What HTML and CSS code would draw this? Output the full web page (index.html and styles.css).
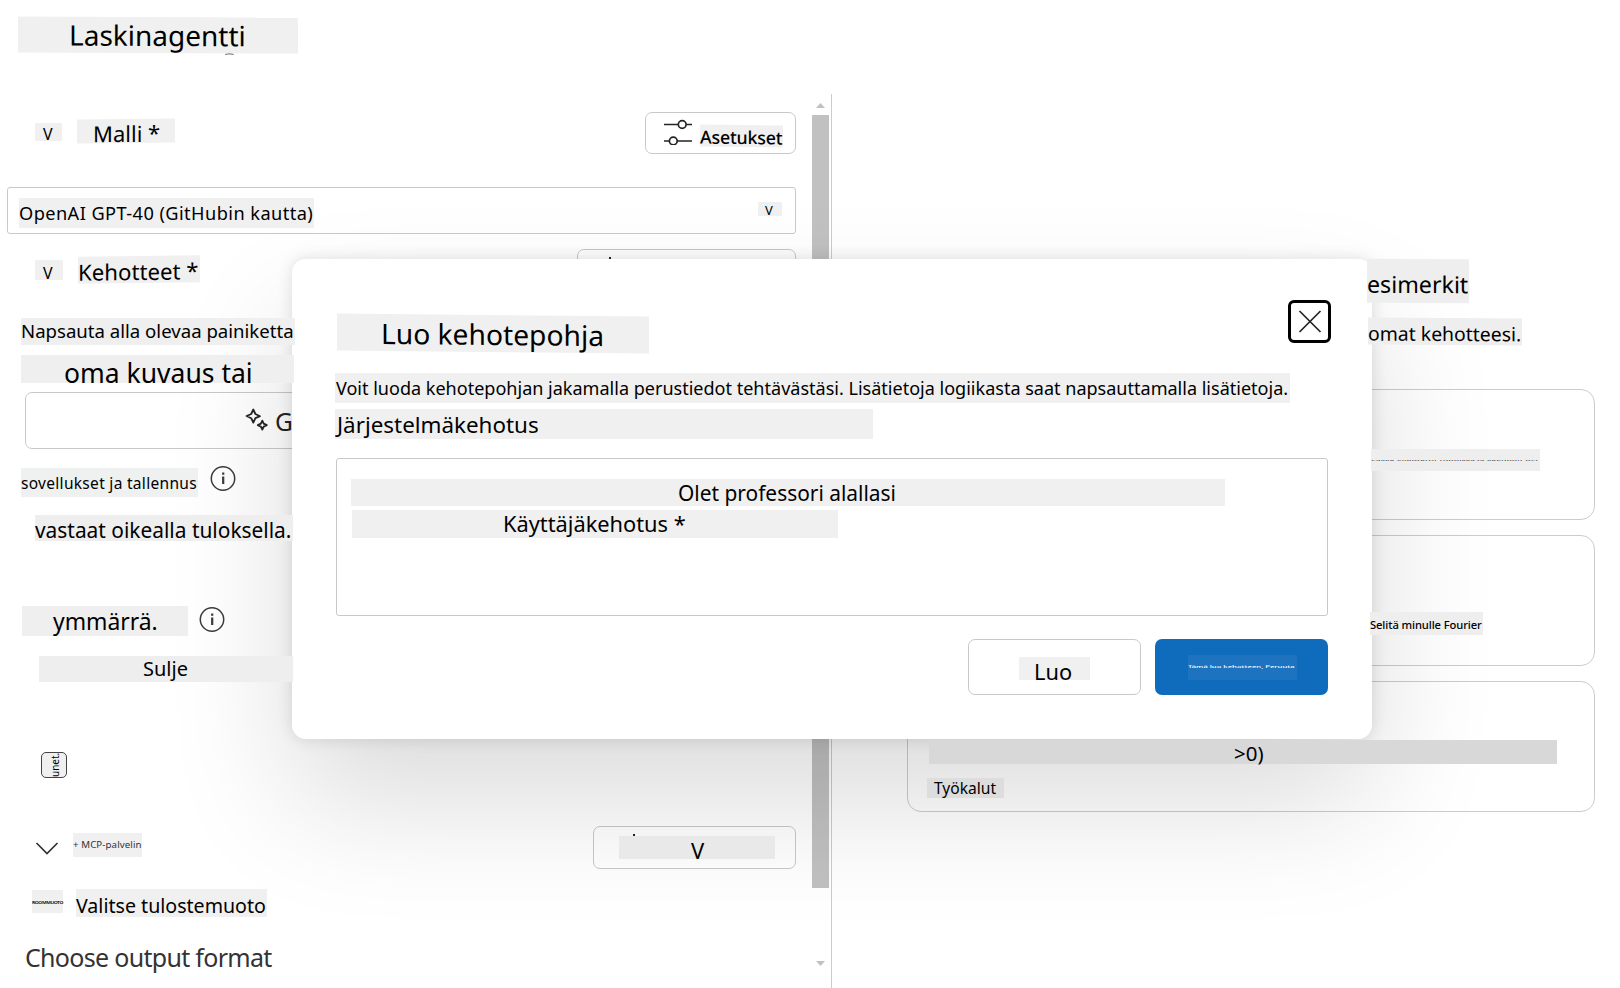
FILE: index.html
```html
<!DOCTYPE html>
<html lang="fi">
<head>
<meta charset="utf-8">
<title>Laskinagentti</title>
<link rel="stylesheet" href="styles.css">
</head>
<body>
<div class="app">
  <header class="topbar"><h1 class="label title">Laskinagentti</h1></header>
  <main class="columns">
    <section class="editor">
      <div class="row row-model">
        <span class="label fold">V</span>
        <span class="label model">Malli *</span>
        <button class="outline settings">
          <svg width="30" height="26" viewBox="0 0 30 26" fill="none" stroke="#242424" stroke-width="1.7"><path d="M1 5.500h14M23 5.500h6M1 22h5M14 22h15"/><circle cx="19.2" cy="5.500" r="3.9"/><circle cx="10.3" cy="22" r="3.9"/></svg>
          <span class="label settings-text">Asetukset</span>
        </button>
      </div>
      <div class="select">
        <span class="label select-text">OpenAI GPT-40 (GitHubin kautta)</span>
        <span class="label select-arrow">V</span>
      </div>
      <div class="row row-prompts">
        <span class="label fold fold-prompts">V</span>
        <span class="label prompts">Kehotteet *</span>
        <button class="outline add-prompt"><i class="tick"></i></button>
      </div>
      <span class="label hint">Napsauta alla olevaa painiketta</span>
      <span class="label own">oma kuvaus tai</span>
      <button class="outline generate">
        <svg width="24" height="24" viewBox="0 0 24 24" fill="none" stroke="#242424" stroke-width="1.8" stroke-linejoin="round"><path d="M8.3 1.5 10.4 6 15 8.2 10.4 10.2 8.3 14.6 6.2 10.2 1.6 8 6.2 6Z"/><path d="M17.3 12.6 18.7 15.6 21.8 17.1 18.7 18.6 17.3 21.6 15.9 18.6 12.8 17.1 15.9 15.6Z"/></svg>
        <span class="generate-text">G</span>
      </button>
      <div class="row row-system">
        <span class="label system">sovellukset ja tallennus</span>
        <svg class="info" width="26" height="26" viewBox="0 0 26 26"><circle cx="13" cy="12.500" r="11.700" fill="none" stroke="#3b3b3b" stroke-width="1.5"/><path d="M13.200 10.500v7.500M13.200 6.500v2.200" stroke="#3b3b3b" stroke-width="2.2"/></svg>
      </div>
      <span class="label answer">vastaat oikealla tuloksella.</span>
      <div class="row row-user">
        <span class="label user">ymmärrä.</span>
        <svg class="info" width="26" height="26" viewBox="0 0 26 26"><circle cx="13" cy="13.500" r="11.700" fill="none" stroke="#3b3b3b" stroke-width="1.5"/><path d="M13.200 11.500v7.500M13.200 7.500v2.200" stroke="#3b3b3b" stroke-width="2.2"/></svg>
      </div>
      <span class="label close-text">Sulje</span>
      <div class="attachment"><span class="attachment-text">unet.</span></div>
      <div class="row row-tools">
        <svg class="chevron" width="24" height="14" viewBox="0 0 24 14" fill="none" stroke="#333" stroke-width="1.7"><path d="M1.500 1 12 11.500 22.500 1"/></svg>
        <span class="label mcp">+ MCP-palvelin</span>
        <button class="outline add-tool"><i class="tick"></i><span class="label add-tool-text">V</span></button>
      </div>
      <div class="row row-output">
        <span class="label tiny-output"><span class="squeezed">ROOMMUOTO</span></span>
        <span class="label output">Valitse tulostemuoto</span>
      </div>
      <p class="choose">Choose output format</p>
    </section>
    <div class="scrollbar">
      <svg width="9" height="5"><path d="M0 5 4.5 0 9 5Z" fill="#c1c1c1"/></svg>
      <div class="thumb"></div>
      <svg width="9" height="5"><path d="M0 0h9L4.500 5Z" fill="#c1c1c1"/></svg>
    </div>
    <section class="examples">
      <span class="label examples-title">esimerkit</span>
      <span class="label examples-sub">omat kehotteesi.</span>
      <div class="card"><span class="label card-tiny"><span class="squeezed">Laske kilometrit tunnissa ja sekunnit nyt</span></span></div>
      <div class="card"><span class="label fourier">Selitä minulle Fourier</span></div>
      <div class="card"><span class="label formula">&gt;0)</span><span class="label tools">Työkalut</span></div>
    </section>
  </main>

  <div class="dialog" role="dialog">
    <div class="dialog-head">
      <h2 class="label dialog-title">Luo kehotepohja</h2>
      <button class="close"><svg width="24" height="24" viewBox="0 0 24 24" stroke="#242424" stroke-width="1.7"><path d="M1.500 1l21 21M22.500 1l-21 21"/></svg></button>
    </div>
    <span class="label desc">Voit luoda kehotepohjan jakamalla perustiedot tehtävästäsi. Lisätietoja logiikasta saat napsauttamalla lisätietoja.</span>
    <span class="label system-prompt">Järjestelmäkehotus</span>
    <div class="textarea">
      <span class="label professor">Olet professori alallasi</span>
      <span class="label user-prompt">Käyttäjäkehotus *</span>
    </div>
    <div class="actions">
      <button class="outline action"><span class="label create">Luo</span></button>
      <button class="action primary"><span class="label primary-text"><span class="squeezed">Tämä luo kehotteen, Peruuta</span></span></button>
    </div>
  </div>
</div>
</body>
</html>
```
FILE: styles.css
```css
* { box-sizing: border-box; }
body {
  margin: 0;
  background: #fff;
  color: #000;
  font-family: "Noto Sans", "Open Sans", sans-serif;
}
h1, h2, p { margin: 0; font-weight: 400; }
button { padding: 0; margin: 0; font: inherit; color: inherit; background: transparent; border: 0; }
svg { display: block; flex: none; }

.app { position: relative; width: 1620px; height: 988px; overflow: hidden; }
.topbar { height: 94px; padding: 16px 18px; }
.columns { display: flex; height: 894px; }

/* Highlighted text strips */
.label {
  position: relative;
  z-index: 3;
  display: block;
  flex: none;
  background: #f0f0f0;
  white-space: nowrap;
  text-align: left;
}
.title { width: 280px; height: 36px; margin-top: .5px; padding-left: 51px; font-size: 28px; line-height: 37px; transform: skewY(.25deg); }
.title::after {
  content: "";
  position: absolute;
  left: 207px;
  top: 35.500px;
  width: 9px;
  height: 3px;
  border-top: 1.5px solid #222;
  border-radius: 50% 50% 0 0;
}

/* Left pane */
.editor { width: 812px; padding-top: 18px; display: flex; flex-direction: column; align-items: flex-start; }
.row { display: flex; align-items: flex-start; width: 796px; }
.outline { border: 1px solid #c9c9c9; border-radius: 7px; flex: none; }

.row-model { height: 42px; }
.fold { width: 27px; height: 18px; margin: 11px 0 0 35px; padding-left: 8px; font-size: 16px; line-height: 23px; }
.model { width: 98px; height: 24px; margin: 7px 0 0 15px; padding-left: 16px; font-size: 22px; line-height: 29px; transform: skewY(-.5deg); }
.settings { width: 151px; height: 42px; margin-left: auto; padding: 6px 0 0 17px; display: flex; gap: 7px; align-items: flex-start; }
.settings-text { width: 83px; height: 22px; margin-top: 6px; font-size: 17.800px; line-height: 25px; font-weight: 500; letter-spacing: -.2px; transform: skewY(.7deg); }

.select { display: flex; justify-content: space-between; width: 789px; height: 47px; margin: 33px 0 0 7px; padding: 10px 13px 0 11px; border: 1px solid #c9c9c9; border-radius: 3px; }
.select-text { width: 295px; height: 30px; font-size: 18.200px; line-height: 30px; letter-spacing: .43px; }
.select-arrow { width: 24px; height: 14px; margin-top: 4px; padding-left: 7px; font-size: 13px; line-height: 17px; }

.row-prompts { height: 42px; margin-top: 15px; }
.fold-prompts { width: 28px; height: 20px; line-height: 27px; }
.prompts { width: 122px; height: 27px; margin: 7px 0 0 15px; font-size: 22.200px; line-height: 31px; transform: skewY(-.7deg); }
.add-prompt { width: 219px; height: 42px; margin-left: auto; padding: 7px 0 0 31px; display: flex; align-items: flex-start; }
.tick { display: block; flex: none; width: 2px; height: 2px; background: #242424; }

.hint { width: 274px; height: 27px; margin: 27px 0 0 21px; background: #efefef; font-size: 18.600px; line-height: 26px; }
.own { width: 273px; height: 28px; margin: 10px 0 0 21px; padding-left: 43px; background: #efefef; font-size: 26.500px; line-height: 36px; }
.generate { display: flex; width: 771px; height: 57px; margin: 9px 0 0 25px; padding: 15px 0 0 219px; gap: 6px; }
.generate-text { font-size: 24.500px; line-height: 27px; color: #242424; }

.row-system { height: 31px; margin-top: 17px; gap: 12px; padding-left: 21px; }
.system { width: 177px; height: 29px; margin-top: 2px; background: #eff1f1; font-size: 15.500px; line-height: 30px; letter-spacing: .3px; }
.answer { width: 258px; height: 26px; margin: 18px 0 0 35px; background: #eee; font-size: 20.900px; line-height: 31px; }
.row-user { height: 30px; margin-top: 65px; gap: 11px; padding-left: 22px; }
.user { width: 166px; height: 30px; padding-left: 31px; font-size: 22.900px; line-height: 31px; background: #efefef; }
.close-text { width: 254px; height: 26px; margin: 20px 0 0 39px; padding-left: 104px; background: #eee; font-size: 20px; line-height: 26px; }

.attachment { width: 26px; height: 26px; margin: 70px 0 0 41px; border: 1.500px solid #444; border-radius: 5px; background: #f0f0f0; overflow: hidden; }
.attachment-text { display: block; writing-mode: vertical-rl; transform: rotate(180deg); width: 27px; height: 24px; font-size: 10px; line-height: 27px; }

.row-tools { height: 43px; margin-top: 48px; padding-left: 35px; }
.chevron { margin-top: 16px; }
.mcp { width: 69px; height: 24px; margin: 7px 0 0 14px; font-size: 9.700px; line-height: 23px; letter-spacing: .1px; color: #333; }
.add-tool { width: 203px; height: 43px; margin-left: auto; padding: 7px 0 0 39px; display: flex; align-items: flex-start; }
.add-tool-text { width: 156px; height: 23px; margin: 2px 0 0 -16px; padding-left: 72px; font-size: 22px; line-height: 28px; background: #e9e9e9; }

.row-output { height: 28px; margin-top: 20px; padding-left: 32px; }
.tiny-output { width: 31px; height: 23px; margin-top: 1px; }
.squeezed { display: block; transform: scaleY(.45); transform-origin: 0 50%; }
.tiny-output .squeezed { font-size: 5px; line-height: 25px; font-weight: 600; letter-spacing: -.4px; transform: scaleY(.7); }
.output { width: 191px; height: 28px; margin-left: 13px; font-size: 19.600px; line-height: 34px; }
.choose { margin: 23px 0 0 25px; color: #333; font-size: 25px; line-height: 35px; letter-spacing: -.69px; }

/* Scroll track beside the left pane */
.scrollbar { width: 17px; margin-right: 2px; padding-top: 9px; display: flex; flex-direction: column; align-items: center; }
.thumb { width: 17px; height: 773px; margin: 7px 0 73px; background: #c1c1c1; }

/* Right pane */
.examples { flex: 1; border-left: 1px solid #ccc; padding: 165px 0 0 75px; }
.examples .label { background: #eee; }
.examples-title { width: 102px; height: 44px; margin-left: 460px; font-size: 23.200px; line-height: 50px; transform: skewY(.2deg); }
.examples-sub { width: 154px; height: 27px; margin: 15px 0 0 461px; font-size: 19.400px; line-height: 32px; transform: skewY(.3deg); }
.card { width: 688px; height: 131px; margin-top: 15px; border: 1px solid #ccc; border-radius: 14px; display: flex; flex-direction: column; }
.examples-sub + .card { margin-top: 44px; }
.card-tiny { width: 169px; height: 22px; margin: 59px 0 0 463px; }
.card-tiny .squeezed { font-size: 8.900px; line-height: 23px; transform: scaleY(.25); color: #444; }
.fourier { width: 113px; height: 23px; margin: 76px 0 0 462px; font-size: 11.200px; line-height: 25px; font-weight: 500; letter-spacing: -.1px; }
.examples .formula { width: 628px; height: 24px; margin: 58px 0 0 21px; padding-left: 305px; font-size: 20.500px; line-height: 27px; background: #d8d8d8; }
.examples .tools { width: 77px; height: 20px; margin: 14px 0 0 19px; padding-left: 7px; font-size: 15.600px; line-height: 20px; background: #ddd; }

/* Dialog over both panes */
.dialog {
  position: absolute;
  z-index: 2;
  left: 292px;
  top: 259px;
  width: 1080px;
  height: 480px;
  padding: 41px 41px 44px 43px;
  background: #fff;
  border-radius: 14px;
  box-shadow: 0 0 16px rgba(0, 0, 0, .12), 0 64px 128px rgba(0, 0, 0, .14);
}
.dialog-head { display: flex; justify-content: space-between; align-items: flex-start; height: 73px; }
.dialog-title { width: 312px; height: 37px; margin: 14.500px 0 0 2px; padding-left: 44px; font-size: 28.200px; line-height: 38px; transform: skewY(.55deg); }
.close { width: 43px; height: 43px; border: 3px solid #000; border-radius: 6px; display: flex; align-items: center; justify-content: center; }
.desc { width: 955px; height: 30px; padding-left: 1px; font-size: 18.050px; line-height: 30px; }
.system-prompt { width: 538px; height: 30px; margin-top: 6px; padding-left: 2px; font-size: 22.400px; line-height: 31px; }
.textarea { width: 992px; height: 158px; margin: 19px 0 0 1px; padding: 20px 0 0 14px; border: 1px solid #c9c9c9; border-radius: 3px; }
.professor { width: 874px; height: 27px; padding-left: 327px; font-size: 20.900px; line-height: 28px; }
.user-prompt { width: 486px; height: 28px; margin: 4px 0 0 1px; padding-left: 151px; font-size: 21.800px; line-height: 28px; }
.actions { display: flex; justify-content: flex-end; gap: 14px; width: 993px; margin-top: 23px; }
.action { width: 173px; height: 56px; border-radius: 7px; display: flex; align-items: flex-start; }
.create { width: 71px; height: 23px; margin: 17px 0 0 50px; padding-left: 15px; font-size: 21.800px; line-height: 30px; }
.primary { background: #0f6cbd; color: #fff; }
.primary-text { width: 109px; height: 25px; margin: 16px 0 0 33px; background: #1d73c0; }
.primary-text .squeezed { font-size: 7.700px; line-height: 24px; font-weight: 500; }
```
